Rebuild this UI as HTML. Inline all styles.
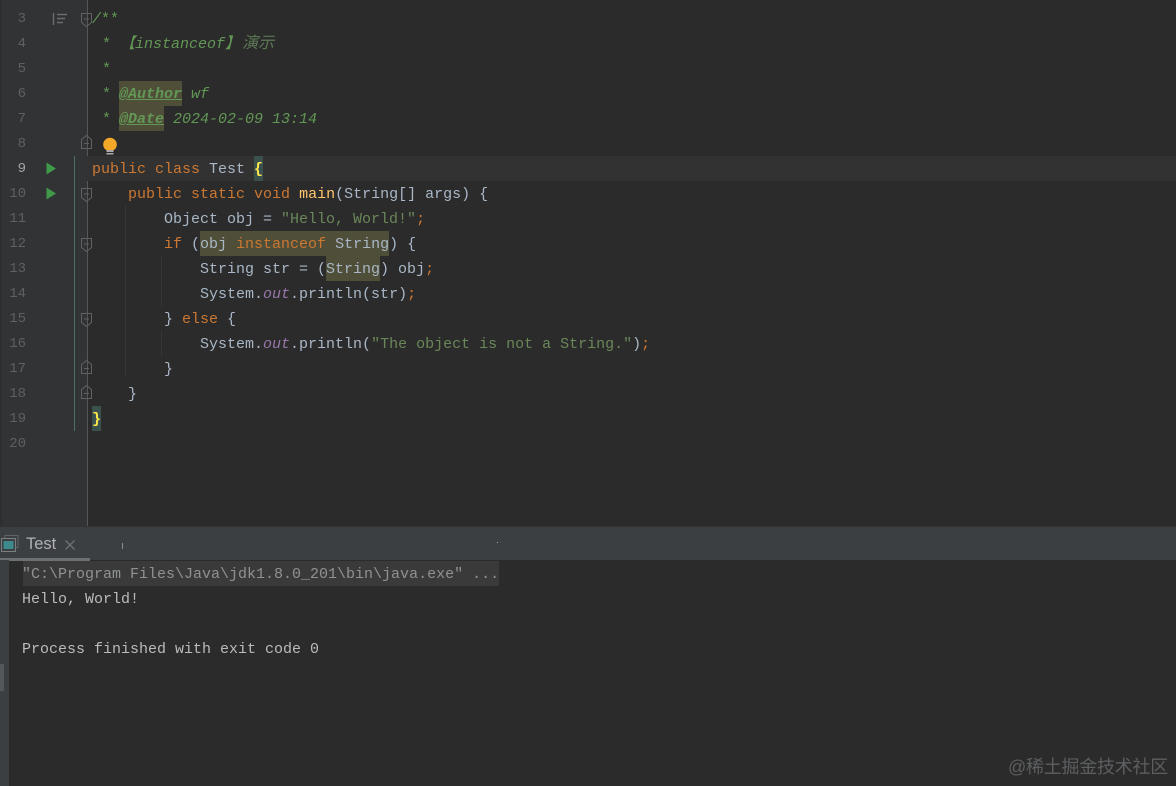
<!DOCTYPE html>
<html><head><meta charset="utf-8">
<style>
*{margin:0;padding:0;box-sizing:border-box}
html,body{width:1176px;height:786px;overflow:hidden;background:#2b2b2b}
body{position:relative;font-family:"Liberation Mono","Noto Sans CJK SC",monospace;font-size:15px;line-height:25px;color:#a9b7c6}
.a{position:absolute}
.l{position:absolute;white-space:pre;height:25px;margin-top:1px;filter:blur(.3px)}
.n{position:absolute;left:0;width:26px;text-align:right;color:#5d6163;font-size:14px;height:25px;margin-top:1px;filter:blur(.3px)}
.k{color:#cc7832}.s{color:#6a8759}.d{color:#629755;font-style:italic}.t{color:#629755;font-weight:bold;font-style:italic;text-decoration:underline}
.f{color:#ffc66d}.i{color:#9876aa;font-style:italic}.y{color:#ffe94d;font-weight:bold}.o{color:#cc7832}
.h{position:absolute;background:#4f4e39}
</style></head><body>
<div class="a" style="left:0;top:0;width:87px;height:527px;background:#313335"></div>
<div class="a" style="left:0;top:0;width:2px;height:527px;background:#2c2e30"></div>
<div class="a" style="left:87px;top:0;width:1px;height:527px;background:#55585a"></div>
<div class="a" style="left:87px;top:156px;width:1089px;height:25px;background:#323232"></div>
<div class="a" style="left:74px;top:156px;width:1px;height:275px;background:#4e6f69"></div>
<div class="a" style="left:125px;top:206px;width:1px;height:170px;background:#373737"></div>
<div class="a" style="left:161px;top:256px;width:1px;height:50px;background:#373737"></div>
<div class="a" style="left:161px;top:331px;width:1px;height:25px;background:#373737"></div>

<div class="h" style="left:119px;top:81px;width:63px;height:25px"></div>
<div class="h" style="left:119px;top:106px;width:45px;height:25px"></div>
<div class="h" style="left:200px;top:231px;width:189px;height:25px"></div>
<div class="h" style="left:326px;top:256px;width:54px;height:25px"></div>
<div class="a" style="left:254px;top:156px;width:9px;height:25px;background:#3b514d"></div>
<div class="a" style="left:92px;top:406px;width:9px;height:25px;background:#3b514d"></div>

<div class="n" style="top:6px">3</div>
<div class="n" style="top:31px">4</div>
<div class="n" style="top:56px">5</div>
<div class="n" style="top:81px">6</div>
<div class="n" style="top:106px">7</div>
<div class="n" style="top:131px">8</div>
<div class="n" style="top:156px;color:#a4a3a3">9</div>
<div class="n" style="top:181px">10</div>
<div class="n" style="top:206px">11</div>
<div class="n" style="top:231px">12</div>
<div class="n" style="top:256px">13</div>
<div class="n" style="top:281px">14</div>
<div class="n" style="top:306px">15</div>
<div class="n" style="top:331px">16</div>
<div class="n" style="top:356px">17</div>
<div class="n" style="top:381px">18</div>
<div class="n" style="top:406px">19</div>
<div class="n" style="top:431px">20</div>

<svg class="a" style="left:0;top:0" width="130" height="440" fill="none" stroke="#5f6264" stroke-width="1">
<path d="M53.500 13v12M57 14.500h10M57 18.500h8M57 22.500h6" stroke="#6b6e70" stroke-width="1.400"/>
<path d="M81.500 13.500h10v9l-5 4-5-4z"/><path d="M84 19h5"/>
<path d="M81.500 148.500h10v-9l-5-4-5 4z"/><path d="M84 143.500h5"/>
<path d="M81.500 188.500h10v9l-5 4-5-4z"/><path d="M84 194h5"/>
<path d="M81.500 238.500h10v9l-5 4-5-4z"/><path d="M84 244h5"/>
<path d="M81.500 313.500h10v9l-5 4-5-4z"/><path d="M84 319h5"/>
<path d="M81.500 373.500h10v-9l-5-4-5 4z"/><path d="M84 368.500h5"/>
<path d="M81.500 398.500h10v-9l-5-4-5 4z"/><path d="M84 393.500h5"/>
<path d="M46.500 162.500l9.500 6-9.500 6z" fill="#3f9a4a" stroke="none"/>
<path d="M46.500 187.500l9.500 6-9.500 6z" fill="#3f9a4a" stroke="none"/>
<circle cx="110" cy="144.500" r="6.800" fill="#f2a728" stroke="none"/>
<path d="M106.500 150h7v2h-7zM106.500 153h7v1.500h-7z" fill="#aaa" stroke="none"/>
</svg>

<div class="l" style="left:92px;top:6px;color:#629755;font-style:italic">/<span style="font-style:normal">**</span></div>
<div class="l d" style="left:93px;top:31px"> <span style="font-style:normal">*</span> 【instanceof】<span style="margin-left:2px;font-size:16px;color:#5c7a54">演示</span></div>
<div class="l d" style="left:93px;top:56px"> <span style="font-style:normal">*</span></div>
<div class="l d" style="left:93px;top:81px"> <span style="font-style:normal">*</span></div>
<div class="l d" style="left:92px;top:81px">   <span class="t">@Author</span> wf</div>
<div class="l d" style="left:93px;top:106px"> <span style="font-style:normal">*</span></div>
<div class="l d" style="left:92px;top:106px">   <span class="t">@Date</span> 2024-02-09 13:14</div>
<div class="l" style="left:92px;top:156px"><span class="k">public class</span> Test <span class="y">{</span></div>
<div class="l" style="left:92px;top:181px">    <span class="k">public static void</span> <span class="f">main</span>(String[] args) {</div>
<div class="l" style="left:92px;top:206px">        Object obj = <span class="s">"Hello, World!"</span><span class="o">;</span></div>
<div class="l" style="left:92px;top:231px">        <span class="k">if</span> (obj <span class="k">instanceof</span> String) {</div>
<div class="l" style="left:92px;top:256px">            String str = (String) obj<span class="o">;</span></div>
<div class="l" style="left:92px;top:281px">            System.<span class="i">out</span>.println(str)<span class="o">;</span></div>
<div class="l" style="left:92px;top:306px">        } <span class="k">else</span> {</div>
<div class="l" style="left:92px;top:331px">            System.<span class="i">out</span>.println(<span class="s">"The object is not a String."</span>)<span class="o">;</span></div>
<div class="l" style="left:92px;top:356px">        }</div>
<div class="l" style="left:92px;top:381px">    }</div>
<div class="l" style="left:92px;top:406px"><span class="y">}</span></div>

<!-- bottom tool window -->
<div class="a" style="left:0;top:527px;width:1176px;height:33px;background:#3c3f41"></div>
<div class="a" style="left:0;top:526px;width:1176px;height:1px;background:#323232"></div>
<div class="a" style="left:0;top:558px;width:90px;height:3px;background:#6b7072"></div>
<div class="a" style="left:0;top:560px;width:9px;height:226px;background:#3c3f41"></div>
<div class="a" style="left:0;top:664px;width:4px;height:27px;background:#55585a"></div>
<svg class="a" style="left:0;top:534px" width="20" height="20" fill="none">
<rect x="5" y="1.500" width="13" height="12" stroke="#5f6466"/>
<rect x="1.500" y="4.500" width="14" height="13" fill="#3c3f41" stroke="#7a7f81"/>
<rect x="3.500" y="7" width="10" height="8" fill="#3d8a8c"/>
</svg>
<div class="a" style="left:26px;top:532px;font-family:'Liberation Sans',sans-serif;font-size:16.500px;color:#afb1b3">Test</div>
<svg class="a" style="left:64px;top:539px" width="12" height="12" fill="none" stroke="#6e7173" stroke-width="1.300"><path d="M1.500 1.500l9 9M10.500 1.500l-9 9"/></svg>
<div class="a" style="left:122px;top:543px;width:1px;height:6px;background:#8b8d8f"></div>
<div class="a" style="left:497px;top:542px;width:1px;height:1px;background:#aaa"></div>
<div class="a" style="left:23px;top:561px;width:476px;height:25px;background:#3a3a3a"></div>
<div class="l" style="left:22px;top:561px;color:#8f9193">"C:\Program Files\Java\jdk1.8.0_201\bin\java.exe" ...</div>
<div class="l" style="left:22px;top:586px;color:#bbbbbb">Hello, World!</div>
<div class="l" style="left:22px;top:636px;color:#bbbbbb">Process finished with exit code 0</div>
<div class="a" style="left:1008px;top:755px;font-family:'Liberation Sans','Noto Sans CJK SC',sans-serif;font-size:18px;letter-spacing:-.25px;line-height:25px;color:#5c5e60;white-space:nowrap;width:168px">@稀土掘金技术社区</div>
</body></html>
